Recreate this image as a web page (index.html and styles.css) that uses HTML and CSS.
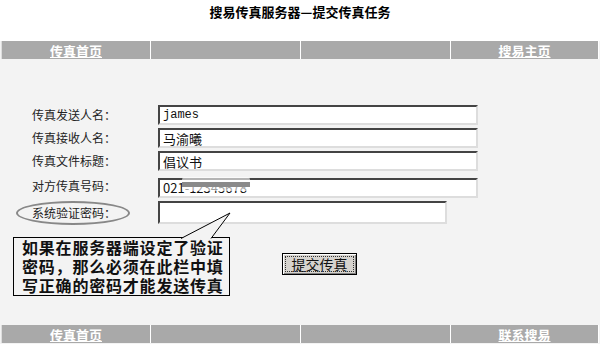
FILE: index.html
```html
<!DOCTYPE html>
<html>
<head>
  <meta charset="utf-8">
  <link rel="stylesheet" href="styles.css">
  <title>搜易传真服务器—提交传真任务</title>
</head>
<body>
  <div class="header">
    <h1>搜易传真服务器—提交传真任务</h1>
  </div>

  <div class="navbar">
    <div class="cell"><a href="#">传真首页</a></div>
    <div class="cell"></div>
    <div class="cell"></div>
    <div class="cell"><a href="#">搜易主页</a></div>
  </div>

  <div class="main">
    <form class="fax-form">
      <label for="sender">传真发送人名：</label>
      <input type="text" id="sender" class="mono" value="james">

      <label for="receiver">传真接收人名：</label>
      <input type="text" id="receiver" value="马渝曦">

      <label for="title">传真文件标题：</label>
      <input type="text" id="title" value="倡议书">

      <label for="number">对方传真号码：</label>
      <span class="blurred">
        <input type="text" id="number" value="021-12345678">
        <span class="smudge"></span>
      </span>

      <label for="password" class="marked">系统验证密码：</label>
      <input type="password" id="password" class="short">
    </form>

    <div class="bottom-row">
      <div class="callout">
        <svg class="pointer" width="60" height="28" viewBox="0 0 60 28">
          <polygon points="7,27.5 37,27.5 56,2" fill="#f3f3f3" stroke="none"/>
          <polyline points="7,27.5 56,2 37,27.5" fill="none" stroke="#000" stroke-width="1"/>
        </svg>
        <div>如果在服务器端设定了验证</div>
        <div>密码，那么必须在此栏中填</div>
        <div>写正确的密码才能发送传真</div>
      </div>
      <button type="button">提交传真</button>
    </div>
  </div>

  <div class="navbar">
    <div class="cell"><a href="#">传真首页</a></div>
    <div class="cell"></div>
    <div class="cell"></div>
    <div class="cell"><a href="#">联系搜易</a></div>
  </div>
</body>
</html>
```

FILE: styles.css
```css
body {
  margin: 0;
  background-color: #f3f3f3;
  font-family: "Noto Sans CJK SC", sans-serif;
  color: #222;
}
.header {
  background-color: #fff;
  height: 41px;
  text-align: center;
}
h1 {
  margin: 0;
  padding-top: 4px;
  font-size: 13px;
  line-height: 16px;
  color: #000;
}
.navbar {
  display: grid;
  grid-template-columns: 149px 150px 150px 148px;
  height: 18px;
  margin: 0 1px;
  background-color: #a9a9a9;
  border-left: 1px solid #ddd;
}
.cell {
  border-right: 1px solid #fff;
  text-align: center;
  line-height: 17px;
}
.navbar a {
  color: #fff;
  font-size: 13px;
  font-weight: bold;
  text-decoration: underline;
}
.main {
  height: 266px;
  padding-top: 46px;
  box-sizing: border-box;
}
.fax-form {
  display: grid;
  grid-template-columns: 126px 320px;
  row-gap: 3px;
  padding-left: 32px;
  align-items: center;
}
label {
  font-size: 12px;
  line-height: 16px;
  color: #222;
  position: relative;
}
input {
  width: 320px;
  height: 20px;
  box-sizing: border-box;
  margin: 0;
  padding: 0 3px;
  border: 2px solid;
  border-color: #444 #ddd #ddd #444;
  background-color: #fff;
  font-family: "Noto Sans CJK SC", sans-serif;
  font-size: 13px;
  color: #111;
}
input.mono {
  font-family: "Liberation Mono", monospace;
  font-size: 12px;
}
input.short {
  width: 289px;
  height: 23px;
}
.blurred {
  position: relative;
  display: block;
}
.smudge {
  position: absolute;
  left: 24px;
  top: 3px;
  width: 68px;
  height: 14px;
  background: linear-gradient(rgba(255,255,255,0.6) 0, rgba(255,255,255,0.6) 5px, #8a8a8a 5px, #8a8a8a 10px, rgba(255,255,255,0.6) 10px);
  border-radius: 3px;
}
.marked::before {
  content: "";
  position: absolute;
  left: -16px;
  top: -4px;
  width: 110px;
  height: 20px;
  border: 2px solid #888;
  border-radius: 50%;
}
.bottom-row {
  display: flex;
  align-items: center;
  gap: 52px;
  padding-left: 13px;
  margin-top: 13px;
}
.callout {
  position: relative;
  width: 217px;
  height: 59px;
  box-sizing: border-box;
  border: 1px solid #000;
  padding: 0 0 0 8px;
  white-space: nowrap;
  font-size: 16px;
  font-weight: bold;
  line-height: 19px;
  letter-spacing: 0.8px;
  color: #111;
}
.pointer {
  position: absolute;
  left: 160px;
  top: -27px;
}
button {
  width: 75px;
  height: 22px;
  margin-top: -6px;
  padding: 0;
  background-color: #d6d3ce;
  border: 1px solid #000;
  outline: 1px dotted #333;
  outline-offset: -4px;
  box-shadow: inset 1px 1px 0 #fff, inset -1px -1px 0 #808080;
  font-family: "Noto Sans CJK SC", sans-serif;
  font-size: 14px;
  line-height: 18px;
  color: #111;
}
```
